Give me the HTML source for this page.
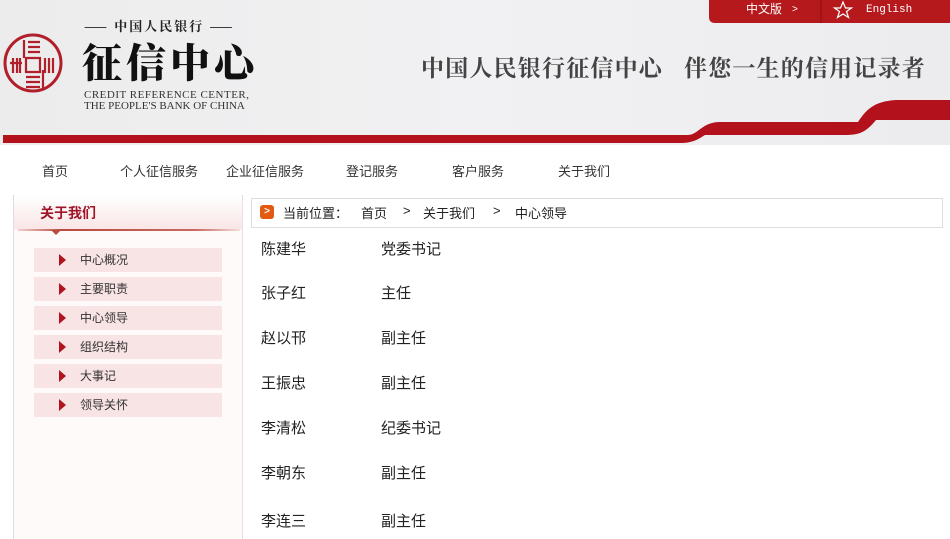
<!DOCTYPE html>
<html><head><meta charset="utf-8"><style>
*{margin:0;padding:0;box-sizing:border-box}
body{width:950px;height:539px;overflow:hidden;background:#fff;font-family:"Liberation Sans","Noto Sans CJK SC",sans-serif;position:relative;color:#333}
.abs{position:absolute}
#hdr{left:0;top:0;width:950px;height:145px;background:linear-gradient(90deg,#ececec,#f1f1f3 50%,#ececee)}
.nav{top:161px;font-size:13px;color:#333}
.side{left:13px;top:195px;width:230px;height:344px;background:#fffafa;border-left:1px solid #ddd;border-right:1px solid #e6e0e0}
.item{left:34px;width:188px;height:24px;background:#f8e3e5;font-size:12px;color:#333;line-height:24px;padding-left:46px}
.item:before{content:"";position:absolute;left:25px;top:6px;border-left:7px solid #b0141e;border-top:6px solid transparent;border-bottom:6px solid transparent}
.nm{left:261px;font-size:15px;color:#222}
.tt{left:381px;font-size:15px;color:#222}
.bc{top:203px;font-size:13px;color:#222}
</style></head><body>
<div id="hdr" class="abs"></div>
<svg class="abs" style="left:0;top:0" width="950" height="145">
<path d="M3,135 L688,135 C698,135 702,122 720,122 L858,122 C866,110 874,100 900,100 L950,100 L950,120 L876,120 C866,132 860,135 845,135 L705,135 C697,140 692,143 680,143 L3,143Z" fill="#b3111b"/>
<circle cx="33" cy="63" r="28" fill="none" stroke="#b01f2a" stroke-width="3"/>
<g stroke="#b01f2a" stroke-width="2.2" fill="none">
<path d="M24,40 V58 M28,42 H40 M28,47 H40 M28,52 H40 M10,63 H22 M13,58 V73 M17,58 V73 M20,58 V73 M26,58 H40 V72 H26Z M45,58 V73 M49,58 V73 M53,58 V73 M26,77 H40 M26,82 H40 M26,87 H40 M43,70 V88"/>
</g>
<text x="84" y="31" font-size="13" font-weight="bold" font-family="Noto Serif CJK SC,serif" fill="#222" letter-spacing="2">—— 中国人民银行 ——</text>
<text x="82" y="77" font-size="40" font-weight="900" font-family="Noto Serif CJK SC,serif" fill="#111" letter-spacing="4">征信中心</text>
<text x="84" y="98" font-size="11" font-family="Liberation Serif,serif" fill="#333" letter-spacing="0.5">CREDIT REFERENCE CENTER,</text>
<text x="84" y="109" font-size="11" font-family="Liberation Serif,serif" fill="#333" letter-spacing="0">THE PEOPLE'S BANK OF CHINA</text>
<text x="421" y="76" font-size="23" font-weight="bold" font-family="Noto Serif CJK SC,serif" fill="#444" letter-spacing="1.2">中国人民银行征信中心</text>
<text x="684" y="76" font-size="23" font-weight="bold" font-family="Noto Serif CJK SC,serif" fill="#444" letter-spacing="1.2">伴您一生的信用记录者</text>
<path d="M709,0 H950 V23 H715 Q709,23 709,17Z" fill="#b5191c"/>
<line x1="821" y1="0" x2="821" y2="23" stroke="#8a1015"/>
<text x="746" y="13" font-size="12" fill="#fff" font-family="Noto Sans CJK SC,sans-serif">中文版</text>
<text x="792" y="12" font-size="10" fill="#fff">&gt;</text>
<path d="M843,2 L845.5,8 L851.5,8 L846.5,11.5 L848.5,17.5 L843,14 L837.5,17.5 L839.5,11.5 L834.5,8 L840.5,8Z" fill="none" stroke="#fff" stroke-width="1.2"/>
<text x="866" y="12" font-size="11" fill="#fff" font-family="Liberation Mono,monospace">English</text>
</svg>
<div class="abs nav" style="left:42px">首页</div>
<div class="abs nav" style="left:120px">个人征信服务</div>
<div class="abs nav" style="left:226px">企业征信服务</div>
<div class="abs nav" style="left:346px">登记服务</div>
<div class="abs nav" style="left:452px">客户服务</div>
<div class="abs nav" style="left:558px">关于我们</div>
<div class="abs side"></div>
<div class="abs" style="left:14px;top:196px;width:228px;height:33px;background:linear-gradient(#fff,#f9e6e6)"></div>
<div class="abs" style="left:18px;top:229px;width:222px;height:2px;background:linear-gradient(90deg,#f0d0d0,#b94a3e 20%,#c86a60 80%,#f4dddd)"></div>
<div class="abs" style="left:51px;top:230px;border-top:5px solid #b94a3e;border-left:5px solid transparent;border-right:5px solid transparent"></div>
<div class="abs" style="left:40px;top:203px;font-size:14px;font-weight:bold;color:#a0142a">关于我们</div>
<div class="abs item" style="top:248px">中心概况</div>
<div class="abs item" style="top:277px">主要职责</div>
<div class="abs item" style="top:306px">中心领导</div>
<div class="abs item" style="top:335px">组织结构</div>
<div class="abs item" style="top:364px">大事记</div>
<div class="abs item" style="top:393px">领导关怀</div>
<div class="abs" style="left:251px;top:198px;width:692px;height:30px;border:1px solid #ddd;background:#fff"></div>
<div class="abs" style="left:260px;top:205px;width:14px;height:14px;border-radius:3px;background:#e25a12;color:#fff;font-size:10px;line-height:14px;text-align:center;font-weight:bold">&gt;</div>
<div class="abs bc" style="left:283px">当前位置：</div>
<div class="abs bc" style="left:361px">首页</div>
<div class="abs bc" style="left:403px">&gt;</div>
<div class="abs bc" style="left:423px">关于我们</div>
<div class="abs bc" style="left:493px">&gt;</div>
<div class="abs bc" style="left:515px">中心领导</div>
<div class="abs nm" style="top:238px">陈建华</div><div class="abs tt" style="top:238px">党委书记</div>
<div class="abs nm" style="top:282px">张子红</div><div class="abs tt" style="top:282px">主任</div>
<div class="abs nm" style="top:327px">赵以邗</div><div class="abs tt" style="top:327px">副主任</div>
<div class="abs nm" style="top:372px">王振忠</div><div class="abs tt" style="top:372px">副主任</div>
<div class="abs nm" style="top:417px">李清松</div><div class="abs tt" style="top:417px">纪委书记</div>
<div class="abs nm" style="top:462px">李朝东</div><div class="abs tt" style="top:462px">副主任</div>
<div class="abs nm" style="top:510px">李连三</div><div class="abs tt" style="top:510px">副主任</div>
</body></html>
